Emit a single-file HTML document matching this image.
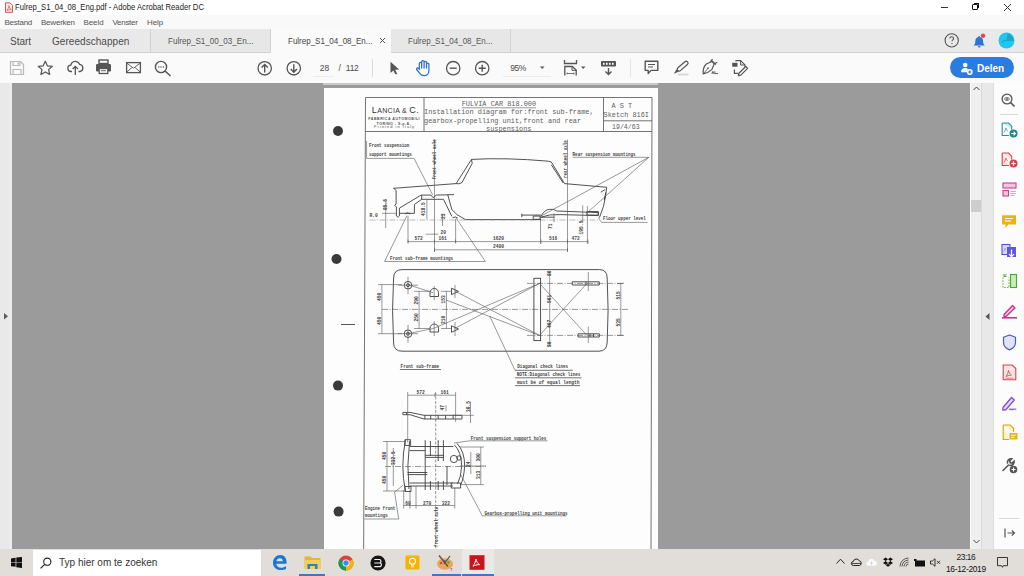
<!DOCTYPE html>
<html><head><meta charset="utf-8">
<style>
*{margin:0;padding:0;box-sizing:border-box}
html,body{width:1024px;height:576px;overflow:hidden;background:#fff;font-family:"Liberation Sans",sans-serif}
.a{position:absolute}
.t{position:absolute;white-space:pre;line-height:1}
svg{position:absolute;overflow:visible}
</style></head><body>
<div class="a" style="left:0;top:0;width:1024px;height:15px;background:#fff"></div>
<div class="a" style="left:0;top:15px;width:1024px;height:14px;background:#f9f9f9"></div>
<div class="a" style="left:0;top:29px;width:1024px;height:24px;background:#e9e9e9;border-bottom:1px solid #d2d2d2"></div>
<div class="a" style="left:0;top:53px;width:1024px;height:30px;background:#fafafa"></div>
<div class="a" style="left:0;top:83px;width:1024px;height:466px;background:#9b9b9b"></div>
<div class="a" style="left:323px;top:83px;width:335px;height:2px;background:#c9c9c9"></div>
<div class="a" style="left:0;top:83px;width:12px;height:466px;background:#e9e9e9;border-right:3.5px solid #ececec"></div>
<div class="a" style="left:970px;top:83px;width:12px;height:466px;background:#efefef;border-left:1px solid #fafafa;border-right:1px solid #d9d9d9"></div>
<div class="a" style="left:982px;top:83px;width:12px;height:466px;background:#e8e8e8;border-right:1px solid #dedede"></div>
<div class="a" style="left:994px;top:83px;width:30px;height:466px;background:#fcfcfc"></div>
<div class="a" style="left:324px;top:88px;width:334px;height:461px;background:#fdfdfd"></div>
<!-- ===== PDF PAGE ===== -->
<svg style="left:324px;top:88px" width="334" height="461" viewBox="324 88 334 461">
<g fill="#3a3a3a">
<circle cx="338" cy="131" r="5"/><circle cx="336.5" cy="259" r="5"/><circle cx="338" cy="385.6" r="5"/><circle cx="338.6" cy="511.6" r="5"/>
</g>
<path d="M341 324.5h14" stroke="#444" stroke-width=".9"/>
<g fill="none" stroke="#505050" stroke-width=".8">
<!-- frame -->
<path d="M365.5 97.5L363.6 560M365.5 97.5H652M652 97.5L651 560"/>
<path d="M365.3 131.5H652M424 97.5V131.5M603.5 97.5V131.5M603.5 120.8H652"/>
</g>
<g font-family="Liberation Mono" fill="#606060">
<text x="461.7" y="106.3" font-size="6.9">FULVIA CAR 818.000</text>
<text x="424" y="114" font-size="6.9">Installation diagram for:front sub-frame,</text>
<text x="424" y="122.8" font-size="6.9">gearbox-propelling unit,front and rear</text>
<text x="486" y="131" font-size="6.9">suspensions</text>
<text x="611.5" y="107.8" font-size="6.9">A S T</text>
<text x="603.5" y="117" font-size="6.9">Sketch 816I</text>
<text x="612" y="128.8" font-size="6.6">19/4/63</text>
</g>
<path d="M461.7 107.8H536" stroke="#555" stroke-width=".6"/>
<g font-family="Liberation Sans" fill="#3a3a3a">
<text x="371.8" y="113.2" font-size="9.2" textLength="47" lengthAdjust="spacing" fill="#333">L<tspan font-size="7">ANCIA &amp; </tspan>C.</text>
<text x="368.3" y="120" font-size="3.6" font-weight="bold" textLength="51.3" lengthAdjust="spacing" fill="#555">FABBRICA AUTOMOBILI</text>
<text x="376.6" y="124.5" font-size="3.6" font-weight="bold" textLength="34" lengthAdjust="spacing" fill="#555">TORINO - S.p.A.</text>
<text x="373.8" y="128.3" font-size="4" textLength="40.2" lengthAdjust="spacing" fill="#555">Printed in Italy</text>
</g>
<!-- ===== car side view ===== -->
<g fill="none" stroke="#3e3e3e" stroke-width=".9">
<path d="M393.5 188.3L456.1 183.6L471.5 159.4Q506 157.4 548.3 161.2L551.3 162L564.5 183.6L606.7 187.3L605.6 195.8L603.5 206.3L599.4 217.7M605.2 189.5L600.8 192.2M605.8 192.5L604.2 200"/>
<path d="M456.1 183.6Q459 184.5 462 182.5L472.2 163.4L471.5 159.4M551.3 164.8L563.2 183"/>
<path d="M393.5 188.3L396.1 190.4V204L394.6 205.2L396.4 207V216L398.2 217.2L399.4 216V208.1L421.1 195.1H431L433.1 197.7L436.3 195.1L454 194.6M447.7 194.6L451.9 209.7Q456 215 465.4 219.6H541"/>
<path d="M399.4 213.3H414.4V204.5L421.7 199.3H443.5L451.9 216.5M421.7 195.1V199.3M405 213.9q2.6-2.2 5.2 0M452.5 218q2.6-2.2 5.2 0"/>
<path d="M521.8 213.7V217.2M521.8 215.1H541M533.2 216.1h6.8v3.2h-6.8z"/>
<path d="M541 216.1Q545 209.4 549.4 209.4H553.5L556.7 211L598.3 212.6V215.6L560 214.6Q549 214 541 217.2H554.6M586.9 211.5h11.4v3.6h-11.4z"/>
</g>
<g fill="none" stroke="#555" stroke-width=".6">
<path d="M369.4 220H599" stroke-dasharray="6 1.5 1 1.5" stroke="#888" stroke-width=".55"/>
<path d="M434.5 139.7V252M567.5 139.7V252"/>
<path d="M408 215.8V242.8M455.6 219V242.8M540.5 216V244M582.7 205.3V221M587.4 206V244M426.9 199.8V219.6M442.5 214V226M554 213.5V222"/>
<path d="M408 241.6H588M434.5 249.8H567.5M408 239.5v4M434.5 239.5v4M455.6 239.5v4M541 239.5v4M567.5 239.5v4M588 239.5v4M434.5 247.8v4M567.5 247.8v4"/>
<path d="M382 213.3H396M385.7 199.8V228"/>
<path d="M425.8 234.2H438.3"/>
<!-- leaders -->
<path d="M366.6 141V158.4H414L432.6 194.8"/>
<path d="M572.6 157.3H648.8L541 216.1M648.8 157.3L588 212"/>
<path d="M601.5 222.4H647.6M601.5 222.4L598.3 217.7"/>
<path d="M384.6 261.5H485.4M384.6 261.5L406.9 215.8M485.4 261.5L456 218"/>
</g>
<g font-family="Liberation Mono" fill="#444" font-size="4.2" font-weight="bold">
<text x="369" y="147" font-size="5.4" textLength="40.3" lengthAdjust="spacingAndGlyphs">Front suspension</text>
<text x="369" y="156" font-size="5.4" textLength="42.8" lengthAdjust="spacingAndGlyphs">support mountings</text>
<text x="572.6" y="155.5" font-size="5.4" textLength="63.0" lengthAdjust="spacingAndGlyphs">Rear suspension mountings</text>
<text x="603" y="220" font-size="5.4" textLength="42.8" lengthAdjust="spacingAndGlyphs">Floor upper level</text>
<text x="390" y="260" font-size="5.4" textLength="63.0" lengthAdjust="spacingAndGlyphs">Front sub-frame mountings</text>
<text x="369.4" y="217" font-size="4.6">R.0</text>
<text x="414.5" y="240" font-size="4.6">572</text>
<text x="438.5" y="240" font-size="4.6">161</text>
<text x="493" y="240" font-size="4.6">1620</text>
<text x="549" y="240" font-size="4.6">516</text>
<text x="571.5" y="240" font-size="4.6">472</text>
<text x="493" y="248" font-size="4.6">2400</text>
<text x="440.4" y="234" font-size="4.6">20</text>
<text transform="translate(436.3 179.5) rotate(-90)" font-size="5.4" textLength="40.3" lengthAdjust="spacingAndGlyphs">front wheel axle</text>
<text transform="translate(567.3 178) rotate(-90)" font-size="5.4" textLength="37.8" lengthAdjust="spacingAndGlyphs">rear wheel axle</text>
<text transform="translate(387.2 210) rotate(-90)" font-size="4.6">85.5</text>
<text transform="translate(425 216) rotate(-90)" font-size="4.6">418.5</text>
<text transform="translate(444.5 219) rotate(-90)" font-size="4.6">23</text>
<text transform="translate(551.5 229) rotate(-90)" font-size="4.6">71</text>
<text transform="translate(582.5 234.4) rotate(-90)" font-size="4.6">195.5</text>
</g>
<!-- ===== chassis plan ===== -->
<g fill="none" stroke="#3e3e3e" stroke-width=".9">
<path d="M402 269.6H599.5Q607 269.6 607.2 278Q609 310 607.2 342Q607 351.2 599 351.2H402Q393.8 351.2 393.6 343Q391.5 310 393.6 278Q393.8 269.6 402 269.6z"/>
<rect x="533.9" y="278.3" width="6.7" height="62.3"/>
<path d="M572.2 281.8h27.1v3.2h-27.1zM586 281.8v3.2M578 333.8h21.3v3.2H578zM590 333.8v3.2M593.5 333.8v3.2"/>
<circle cx="408" cy="285.2" r="3.8"/><circle cx="408" cy="333.7" r="3.8"/><circle cx="408" cy="285.2" r="1.5"/><circle cx="408" cy="333.7" r="1.5"/>
<path d="M430 296.5V292.7A4.2 4.2 0 0 1 438.5 292.7V296.5zM430 332V328.3A4.2 4.2 0 0 1 438.5 328.3V332z"/>
<path d="M451.5 288.2l7 3.2-7 3.2zM451.5 325.8l7 3.2-7 3.2z"/>
</g>
<g fill="none" stroke="#555" stroke-width=".6">
<path d="M382 309.4H628" stroke-dasharray="6 1.5 1 1.5"/>
<path d="M527 283.4H623M527 335.4H623" stroke-dasharray="6 1.5 1 1.5"/>
<path d="M408 276.8V294.3M398 285.2H418M408 325V342.5M398 333.7H418M434.2 286V300M434.2 321V336M455 285V298M455 322V336M549.7 272V346M588.3 272V291M588.3 326.7V343"/>
<path d="M378 284.6H402M378 333.7H402M381.9 284.6V333.7M419.1 291.3V328.5M414 291.3H430M414 328.5H430M446.4 291.3V328.5M441 291.3H452M441 328.5H452"/>
<path d="M620.8 283.4V335.4M617 283.4h7M617 335.4h7"/>
<path d="M407.8 284.6L433.3 292.8M407.8 333.7L433.3 328.5"/>
<path d="M454.7 290.9L539.5 335.4M446 300L539.5 335.4M433.3 328.5L539.5 283.4M454.7 328.5L539.5 283.4"/>
<path d="M539.5 283.4L587 335.4M539.5 335.4L587 283.4"/>
<path d="M515.1 370.5L489.7 316"/>
<path d="M399.9 369.5H440.9M515.1 370.3H572.7M515.1 377.8H581.5M515.1 385.6H580" stroke="#444" stroke-width=".75"/>
</g>
<g font-family="Liberation Mono" fill="#444" font-size="4.2" font-weight="bold">
<text x="400.6" y="367.8" font-size="5.4" textLength="38.5" lengthAdjust="spacingAndGlyphs">Front sub-frame</text>
<text x="517.3" y="368.3" font-size="5.4" textLength="50.8" lengthAdjust="spacingAndGlyphs">Diagonal check lines</text>
<text x="516.8" y="376.2" font-size="5.4" textLength="63.6" lengthAdjust="spacingAndGlyphs">NOTE:Diagonal check lines</text>
<text x="517" y="383.6" font-size="5.4" textLength="62.5" lengthAdjust="spacingAndGlyphs">must be of equal length</text>
<text transform="translate(380.8 301) rotate(-90)" font-size="4.6">450</text>
<text transform="translate(380.8 325) rotate(-90)" font-size="4.6">450</text>
<text transform="translate(418 304.5) rotate(-90)" font-size="4.6">290</text>
<text transform="translate(418 321.5) rotate(-90)" font-size="4.6">250</text>
<text transform="translate(445.3 303.5) rotate(-90)" font-size="4.6">153</text>
<text transform="translate(445.3 324) rotate(-90)" font-size="4.6">210</text>
<text transform="translate(551.2 276) rotate(-90)" font-size="4.6">80</text>
<text transform="translate(551.2 303) rotate(-90)" font-size="4.6">561</text>
<text transform="translate(551.2 328) rotate(-90)" font-size="4.6">407</text>
<text transform="translate(551.2 347) rotate(-90)" font-size="4.6">80</text>
<text transform="translate(619.7 299.5) rotate(-90)" font-size="4.6">515</text>
<text transform="translate(619.7 326.5) rotate(-90)" font-size="4.6">535</text>
</g>
<!-- ===== subframe ===== -->
<g fill="none" stroke="#3e3e3e" stroke-width=".9">
<path d="M402.9 412.4H410L424 415.3H462V419H424L410 414.7H402.9z"/>
<path d="M406.6 412.4V414.7M424.9 415.3v3.7M430.7 415.3v3.7M438.2 415.3v3.7M445.6 415.3v3.7M453.1 415.3v3.7"/>
<path d="M405.4 440.2Q400.3 466 405.4 491M409.6 441Q406.5 466 409 489M404.9 439.7h5.7v5.7h-5.7zM405 486.5h6v5h-6z"/>
<path d="M409.6 446.5H453.3M409.6 450.6H425.2M409.6 483H453M410 486H453M407.5 472.5H427.3M407.5 474.6H427.3"/>
<path d="M425.2 440.2V490M430.4 441V456M430.4 481V490M438.2 440.2V461M438.2 481V490M443.4 440.2V461M443.4 481V490M425.2 455.3H444M425.2 457.4H444M447 466V485"/>
<path d="M454.4 444.9Q461.5 452 461.7 466.25Q461 477 457.5 484M457 443.3Q465 452 464.6 466.25Q464 478 460.5 485M451.25 483h9.35v5h-9.35z"/>
<circle cx="453.9" cy="459" r="3.6"/><circle cx="459" cy="458" r="2.2"/>
</g>
<g fill="none" stroke="#555" stroke-width=".6">
<path d="M385 466.5H486" stroke-dasharray="6 1.5 1 1.5"/>
<path d="M435.7 392V548" stroke-dasharray="3 1.5"/>
<path d="M407.7 395.2H455.6M407.7 392V442.5M455.6 392V422M435 393v4M470.5 401.6V423M453 415.3H473.8M446 405V411.5"/>
<path d="M387 441.5V491M383 441.5H406M383 491H406M393.3 448V486"/>
<path d="M480.8 447V484.6M460 447H484M460 466H486M460 484.6H484M470.8 452V474"/>
<path d="M403.7 505.5H454.8M403.7 490V508.5M410 490V508.5M416 486V508.5M454.8 488V508.5"/>
<path d="M469.8 440.8H547.5M469.8 440.8L454 443"/>
<path d="M460.4 474L482.3 515.8H566.7"/>
<path d="M364.5 519H398.7L394.6 492L403.4 485"/>
</g>
<g font-family="Liberation Mono" fill="#444" font-size="4.2" font-weight="bold">
<text x="470.8" y="440" font-size="5.4" textLength="75.6" lengthAdjust="spacingAndGlyphs">Front suspension support holes</text>
<text x="484.4" y="514.5" font-size="5.4" textLength="83.2" lengthAdjust="spacingAndGlyphs">Gearbox-propelling unit mountings</text>
<text x="365" y="510" font-size="5.4" textLength="30.2" lengthAdjust="spacingAndGlyphs">Engine front</text>
<text x="365" y="516.5" font-size="5.4" textLength="22.7" lengthAdjust="spacingAndGlyphs">mountings</text>
<text x="416.5" y="394" font-size="4.6">572</text>
<text x="440.5" y="394" font-size="4.6">161</text>
<text x="405.3" y="504.5" font-size="4.6">60</text>
<text x="423" y="504.5" font-size="4.6">270</text>
<text x="441.8" y="504.5" font-size="4.6">322</text>
<text transform="translate(444 410.5) rotate(-90)" font-size="4.6">47</text>
<text transform="translate(470.3 412) rotate(-90)" font-size="4.6">30.5</text>
<text transform="translate(386 460) rotate(-90)" font-size="4.6">450</text>
<text transform="translate(386 484) rotate(-90)" font-size="4.6">450</text>
<text transform="translate(395 465) rotate(-90)" font-size="4.6">332.5</text>
<text transform="translate(480 461.5) rotate(-90)" font-size="4.6">300</text>
<text transform="translate(480 479) rotate(-90)" font-size="4.6">313</text>
<text transform="translate(470 467) rotate(-90)" font-size="4.6">24</text>
<text transform="translate(437.8 547) rotate(-90)" font-size="5.4" textLength="40.3" lengthAdjust="spacingAndGlyphs">front wheel axle</text>
</g>
</svg>
<!-- ===== TITLE BAR ===== -->
<svg style="left:4px;top:2px" width="10" height="11" viewBox="0 0 10 11"><path d="M1.5 .8h4.5l2.5 2.5v7H1.5z" fill="#fde6e6" stroke="#d9534f" stroke-width="1"/><path d="M3 8.5c1-1.5 1.8-3 2-4.8c.3 1.8 1.3 3.2 2.3 3.8c-1.5 0-3 .3-4.3 1z" fill="none" stroke="#d9534f" stroke-width=".7"/></svg>
<div class="t" style="left:14.5px;top:3.2px;font-size:9.2px;transform:scaleX(0.835);transform-origin:0 0;color:#222">Fulrep_S1_04_08_Eng.pdf - Adobe Acrobat Reader DC</div>
<div class="a" style="left:941px;top:7px;width:7px;height:1px;background:#333"></div>
<div class="a" style="left:972px;top:4px;width:6px;height:6px;border:1.3px solid #111;border-radius:1px"></div>
<div class="a" style="left:974px;top:3px;width:5px;height:5px;border-top:1.2px solid #111;border-right:1.2px solid #111"></div>
<svg style="left:1004px;top:4px" width="7" height="7" viewBox="0 0 7 7"><path d="M0 0L7 7M7 0L0 7" stroke="#333" stroke-width="1"/></svg>
<!-- ===== MENU ===== -->
<div class="t" style="left:4.5px;top:19px;font-size:8px;letter-spacing:-0.26px;color:#555">Bestand</div>
<div class="t" style="left:41px;top:19px;font-size:8px;letter-spacing:-0.22px;color:#555">Bewerken</div>
<div class="t" style="left:83.5px;top:19px;font-size:8px;letter-spacing:-0.09px;color:#555">Beeld</div>
<div class="t" style="left:112.5px;top:19px;font-size:8px;letter-spacing:-0.3px;color:#555">Venster</div>
<div class="t" style="left:147px;top:19px;font-size:8px;letter-spacing:-0.1px;color:#555">Help</div>
<!-- ===== TABS ===== -->
<div class="t" style="left:10px;top:37px;font-size:10px;color:#4b4b4b">Start</div>
<div class="t" style="left:52px;top:37px;font-size:10px;letter-spacing:0.05px;color:#4b4b4b">Gereedschappen</div>
<div class="a" style="left:150px;top:29px;width:1px;height:23px;background:#d4d4d4"></div>
<div class="a" style="left:151px;top:29px;width:120px;height:23px;background:#e7e7e7"></div>
<div class="a" style="left:270px;top:29px;width:1px;height:23px;background:#d2d2d2"></div>
<div class="t" style="left:168px;top:36.6px;font-size:9.2px;transform:scaleX(0.88);transform-origin:0 0;color:#555">Fulrep_S1_00_03_En...</div>
<div class="a" style="left:271px;top:29px;width:120px;height:24px;background:#fafafa"></div>
<div class="t" style="left:288.3px;top:36.6px;font-size:9.2px;transform:scaleX(0.87);transform-origin:0 0;color:#444">Fulrep_S1_04_08_En...</div>
<svg style="left:380px;top:38px" width="5" height="5" viewBox="0 0 5 5"><path d="M0 0L5 5M5 0L0 5" stroke="#555" stroke-width="1"/></svg>
<div class="a" style="left:391px;top:29px;width:119px;height:23px;background:#e7e7e7"></div>
<div class="a" style="left:510px;top:29px;width:1px;height:23px;background:#d2d2d2"></div>
<div class="t" style="left:408px;top:36.6px;font-size:9.2px;transform:scaleX(0.87);transform-origin:0 0;color:#555">Fulrep_S1_04_08_En...</div>
<!-- help, bell, avatar -->
<svg style="left:944px;top:33px" width="16" height="16" viewBox="0 0 16 16"><circle cx="7.7" cy="7.4" r="6.6" fill="none" stroke="#555" stroke-width="1.1"/><path d="M5.8 5.6c0-1.2.9-1.9 1.9-1.9s1.9.7 1.9 1.7c0 1.3-1.6 1.5-1.6 2.9" fill="none" stroke="#555" stroke-width="1.1"/><circle cx="8" cy="10.6" r=".7" fill="#555"/></svg>
<svg style="left:972px;top:33px" width="16" height="16" viewBox="0 0 16 16"><path d="M1.5 12.5c1.3-1 1.8-2 1.8-4.2c0-2.3 1.3-4 3.2-4.2V3h1.4v1.1c1.9.3 3.2 1.9 3.2 4.2c0 2.2.5 3.2 1.8 4.2z" fill="#2d74d8"/><ellipse cx="7.2" cy="13.8" rx="1.4" ry=".8" fill="#2d74d8"/><circle cx="11" cy="2.8" r="2.2" fill="#e34850"/></svg>
<svg style="left:998px;top:32px" width="17" height="17" viewBox="0 0 17 17"><circle cx="8.5" cy="8.5" r="8" fill="#1fc6ef"/><path d="M8.5 8.5L9.5 1.5A7 7 0 0 1 15.5 8.5z" fill="#1aa7c8"/><path d="M4 10c2-2 5-2.5 11.5-1.5" fill="none" stroke="#1aa7c8" stroke-width="1.2"/></svg>
<!-- ===== TOOLBAR ===== -->
<!-- save (disabled) -->
<svg style="left:9px;top:60px" width="16" height="16" viewBox="0 0 16 16"><path d="M1.5 1.5h10l3 3v10h-13z" fill="none" stroke="#b9b9b9" stroke-width="1.2"/><path d="M4 1.5v4h7v-4M4 14.5v-5h8v5" fill="none" stroke="#b9b9b9" stroke-width="1.2"/><rect x="8.5" y="2.5" width="1.5" height="2" fill="#b9b9b9"/></svg>
<!-- star -->
<svg style="left:37px;top:60px" width="17" height="16" viewBox="0 0 17 16"><path d="M8.3 1.2l2.1 4.6 5 .5-3.8 3.3 1.1 4.9-4.4-2.6-4.4 2.6 1.1-4.9L1.2 6.3l5-.5z" fill="none" stroke="#555" stroke-width="1.2" stroke-linejoin="round"/></svg>
<!-- cloud upload -->
<svg style="left:67px;top:60px" width="17" height="16" viewBox="0 0 17 16"><path d="M5 11.5H4.2a3.2 3.2 0 0 1-.3-6.4A4.5 4.5 0 0 1 12.6 4.4a3.6 3.6 0 0 1 .4 7.1H11.5" fill="none" stroke="#555" stroke-width="1.3"/><path d="M8.3 15V6.5M5.6 9l2.7-2.7L11 9" fill="none" stroke="#555" stroke-width="1.3"/></svg>
<!-- printer -->
<svg style="left:95px;top:59px" width="17" height="16" viewBox="0 0 17 16"><rect x="4" y="1" width="9" height="3.5" fill="none" stroke="#555" stroke-width="1.4"/><rect x="1" y="5" width="15" height="7.5" rx="1.2" fill="#555"/><rect x="4.2" y="9.5" width="8.6" height="5" fill="#fafafa" stroke="#555" stroke-width="1.3"/><rect x="6" y="11.3" width="5" height=".9" fill="#555"/></svg>
<!-- mail -->
<svg style="left:125px;top:61px" width="17" height="13" viewBox="0 0 17 13"><rect x="1.6" y="1.6" width="13.8" height="10" fill="none" stroke="#555" stroke-width="1.3"/><path d="M1.6 2l6.9 5.2 6.9-5.2M1.6 11.2l5.2-4.6M15.4 11.2l-5.2-4.6" fill="none" stroke="#555" stroke-width=".9"/></svg>
<!-- zoom search -->
<svg style="left:154px;top:60px" width="18" height="17" viewBox="0 0 18 17"><circle cx="7" cy="7" r="5.6" fill="none" stroke="#555" stroke-width="1.4"/><path d="M11 11l5.5 5" stroke="#555" stroke-width="1.6"/><circle cx="4.8" cy="7" r=".7" fill="#555"/><circle cx="7" cy="7" r=".7" fill="#555"/><circle cx="9.2" cy="7" r=".7" fill="#555"/></svg>
<!-- up/down -->
<svg style="left:256px;top:60px" width="18" height="17" viewBox="0 0 18 17"><circle cx="8.7" cy="8.3" r="6.7" fill="none" stroke="#555" stroke-width="1.3"/><path d="M8.7 12.5V4.5M5.6 7.5l3.1-3.1 3.1 3.1" fill="none" stroke="#555" stroke-width="1.4"/></svg>
<svg style="left:285px;top:60px" width="18" height="17" viewBox="0 0 18 17"><circle cx="8.8" cy="8.3" r="6.7" fill="none" stroke="#555" stroke-width="1.3"/><path d="M8.8 4.2v8M5.7 9.1l3.1 3.1 3.1-3.1" fill="none" stroke="#555" stroke-width="1.4"/></svg>
<div class="a" style="left:313px;top:76px;width:21px;height:1px;background:#ececec"></div>
<div class="t" style="left:319.8px;top:64px;font-size:8.5px;letter-spacing:-0.1px;color:#4a4a4a">28</div>
<div class="t" style="left:338.5px;top:64px;font-size:8.5px;color:#4a4a4a">/</div>
<div class="t" style="left:345.8px;top:64px;font-size:8.5px;letter-spacing:-0.25px;color:#4a4a4a">112</div>
<div class="a" style="left:372px;top:59px;width:1px;height:18px;background:#dcdcdc"></div>
<!-- pointer -->
<svg style="left:389px;top:61px" width="12" height="14" viewBox="0 0 12 14"><path d="M1.5 .8v11.3l2.9-2.6 2 4.1 1.8-.9-2-3.9 3.9-.2z" fill="#555"/></svg>
<!-- hand -->
<svg style="left:415px;top:59px" width="17" height="18" viewBox="0 0 17 18"><path d="M4.3 10.5V4.5a1.2 1.2 0 0 1 2.4 0V9V2.8a1.2 1.2 0 0 1 2.4 0V9V3.5a1.2 1.2 0 0 1 2.4 0V9V5.3a1.2 1.2 0 0 1 2.4 0v6.2c0 3-2 5.2-4.8 5.2c-2 0-3.2-.8-4.3-2.3L1.6 10.5a1.2 1.2 0 0 1 1.9-1.3z" fill="none" stroke="#2f72c4" stroke-width="1.25" stroke-linejoin="round"/></svg>
<!-- zoom out/in -->
<svg style="left:445px;top:60px" width="17" height="17" viewBox="0 0 17 17"><circle cx="8.2" cy="8.2" r="6.7" fill="none" stroke="#555" stroke-width="1.3"/><path d="M4.7 8.2h7" stroke="#555" stroke-width="1.4"/></svg>
<svg style="left:474px;top:60px" width="17" height="17" viewBox="0 0 17 17"><circle cx="8.2" cy="8.2" r="6.7" fill="none" stroke="#555" stroke-width="1.3"/><path d="M4.7 8.2h7M8.2 4.7v7" stroke="#555" stroke-width="1.4"/></svg>
<div class="a" style="left:503px;top:76px;width:48px;height:1px;background:#ececec"></div>
<div class="t" style="left:510.2px;top:64px;font-size:8.5px;letter-spacing:-0.45px;color:#4a4a4a">95%</div>
<svg style="left:540px;top:66px" width="5" height="4" viewBox="0 0 5 4"><path d="M0 .5h4.5L2.25 3z" fill="#555"/></svg>
<!-- fit page -->
<svg style="left:563px;top:59px" width="16" height="18" viewBox="0 0 16 18"><path d="M1.5 1v3.5h12V1" fill="none" stroke="#555" stroke-width="1.3"/><path d="M1.8 16.5V7.5h7.5l3.9 3.6v5.4" fill="none" stroke="#555" stroke-width="1.3"/><path d="M9 7.5v3.8h4" fill="none" stroke="#555" stroke-width="1"/><path d="M4 14.5h7M4 13.5v2M11 13.5v2" stroke="#555" stroke-width=".8"/></svg>
<svg style="left:581px;top:66px" width="5" height="4" viewBox="0 0 5 4"><path d="M0 .5h4.5L2.25 3z" fill="#555"/></svg>
<!-- scroll mode -->
<svg style="left:600px;top:60px" width="17" height="16" viewBox="0 0 17 16"><rect x="1" y="1" width="15" height="5.5" rx="1" fill="#555"/><rect x="3" y="2.8" width="1.6" height="2" fill="#fafafa"/><rect x="6" y="2.8" width="1.6" height="2" fill="#fafafa"/><rect x="9" y="2.8" width="1.6" height="2" fill="#fafafa"/><rect x="12" y="2.8" width="1.6" height="2" fill="#fafafa"/><path d="M8.5 8v6.5M5.5 11.5l3 3 3-3" fill="none" stroke="#555" stroke-width="1.4"/></svg>
<div class="a" style="left:630px;top:59px;width:1px;height:18px;background:#e4e4e4"></div>
<!-- comment -->
<svg style="left:644px;top:60px" width="16" height="16" viewBox="0 0 16 16"><path d="M1.2 1.2h12.6v9.2H7l-2.8 3.2v-3.2h-3z" fill="none" stroke="#555" stroke-width="1.4" stroke-linejoin="round"/><path d="M4 4.5h7M4 7h5" stroke="#555" stroke-width="1.1"/></svg>
<!-- highlighter -->
<svg style="left:665px;top:54px" width="30" height="28" viewBox="0 0 30 28"><g transform="rotate(-41 17.6 12.2)"><rect x="11.2" y="10.3" width="13" height="3.8" rx="1.9" fill="none" stroke="#555" stroke-width="1.2"/><path d="M11.2 10.6v3.2l-2.6-.6v-2z" fill="#555"/><path d="M8.6 11.2l-2.4 1 2.4 1z" fill="#555"/></g><rect x="13" y="19.5" width="10.5" height="2" fill="#d8d8d8"/></svg>
<!-- sign pen -->
<svg style="left:700px;top:58px" width="20" height="18" viewBox="0 0 20 18"><path d="M3.2 15.8C2.8 12 4.2 8.2 6.2 6L12 3.5l2.3 2.3-2.5 5.8c-2.2 2-6 3.6-8.6 4.2z" fill="none" stroke="#555" stroke-width="1.2" stroke-linejoin="round"/><path d="M10.2 3.8L12.5 1M14.2 6l3-1.8M11.4 2.2l4.5 4.5" fill="none" stroke="#555" stroke-width="1.1"/><circle cx="8" cy="10.2" r=".9" fill="#555"/><path d="M3.5 15.5l4-4.5" stroke="#555" stroke-width=".8"/><path d="M11.8 15.8l1-2.5 1 2.5M12.2 14.9h1.3M14.8 13.2v2.6l1.2-.5 1 .4 1-.2" fill="none" stroke="#555" stroke-width=".9"/></svg>
<!-- edit pdf -->
<svg style="left:731px;top:59px" width="18" height="18" viewBox="0 0 18 18"><path d="M4.3 1.6H9.6l4.4 4.4V8" fill="none" stroke="#555" stroke-width="1.2"/><path d="M9.6 1.6V6H14z" fill="#ddd" stroke="#555" stroke-width="1"/><rect x="1.2" y="3.8" width="5.3" height="3.9" fill="#555"/><path d="M3.4 10.4v4h3.6" fill="none" stroke="#555" stroke-width="1.2"/><path d="M14.8 7.5l1.8 1.8-6.8 6.8-2.5.6.6-2.4z" fill="none" stroke="#555" stroke-width="1.2" stroke-linejoin="round"/></svg>
<!-- Delen button -->
<div class="a" style="left:950px;top:57px;width:64px;height:21px;border-radius:10.5px;background:#2b7ce0"></div>
<svg style="left:960px;top:62px" width="13" height="13" viewBox="0 0 13 13"><circle cx="5.2" cy="3" r="2.3" fill="#fff"/><path d="M1 10.2c0-2.7 1.6-4.3 4-4.3c1.3 0 2.3.4 3 1.2a3.4 3.4 0 0 0-1.1 3.1z" fill="#fff"/><circle cx="9.8" cy="10" r="2.9" fill="#fff"/><path d="M9.8 8.3v3.4M8.1 10h3.4" stroke="#2b7ce0" stroke-width="1"/></svg>
<div class="t" style="left:977px;top:63.5px;font-size:10px;font-weight:bold;letter-spacing:-0.05px;color:#fff">Delen</div>
<!-- ===== LEFT STRIP / SCROLL / RIGHT PANEL ===== -->
<svg style="left:4px;top:313px" width="5" height="7" viewBox="0 0 5 7"><path d="M0 0L4 3.3 0 6.6z" fill="#5c5c5c"/></svg>
<svg style="left:973px;top:86px" width="7" height="5" viewBox="0 0 7 5"><path d="M.5 4L3.5 1 6.5 4" fill="none" stroke="#444" stroke-width="1"/></svg>
<div class="a" style="left:971px;top:200px;width:10px;height:12px;background:#cdcdcd"></div>
<svg style="left:973px;top:539px" width="7" height="5" viewBox="0 0 7 5"><path d="M.5 1L3.5 4 6.5 1" fill="none" stroke="#444" stroke-width="1"/></svg>
<svg style="left:985px;top:313px" width="5" height="7" viewBox="0 0 5 7"><path d="M4.5 0L.5 3.5 4.5 7z" fill="#555"/></svg>
<!-- right panel icons -->
<svg style="left:1001px;top:93px" width="16" height="14" viewBox="0 0 16 14"><circle cx="6" cy="6" r="4.9" fill="none" stroke="#555" stroke-width="1.3"/><path d="M9.5 9.5l4 3.8" stroke="#555" stroke-width="1.6"/><path d="M3.3 6c1.5-2 3.9-2 5.4 0c-1.5 2-3.9 2-5.4 0z" fill="none" stroke="#555" stroke-width=".9"/><circle cx="6" cy="6" r=".9" fill="#555"/></svg>
<div class="a" style="left:1000px;top:114px;width:18px;height:1px;background:#d8d8d8"></div>
<!-- export pdf teal -->
<svg style="left:1001px;top:122px" width="17" height="16" viewBox="0 0 17 16"><path d="M1.2 1h6.3l3.2 3.2V7.5M8 13.5H1.2z" fill="#cfeeee" stroke="#2a8f8f" stroke-width="1.1"/><path d="M1.2 1v12.5H8" fill="none" stroke="#2a8f8f" stroke-width="1.1"/><path d="M3 10.5c1-1.3 1.7-3 2-4.7c.3 1.6 1.1 2.9 2.2 3.6" fill="none" stroke="#2a8f8f" stroke-width=".7"/><circle cx="12.5" cy="11.5" r="4" fill="#1b8a8a"/><path d="M10.3 11.5h4M12.6 9.7l1.8 1.8-1.8 1.8" fill="none" stroke="#fff" stroke-width="1.1"/></svg>
<!-- create pdf red -->
<svg style="left:1001px;top:152px" width="17" height="16" viewBox="0 0 17 16"><path d="M1.2 1h6.3l3.2 3.2V7.5M8 13.5H1.2V1" fill="#fbe0e0" stroke="#d0454c" stroke-width="1.1"/><path d="M3 10.5c1-1.3 1.7-3 2-4.7c.3 1.6 1.1 2.9 2.2 3.6" fill="none" stroke="#d0454c" stroke-width=".7"/><circle cx="12.5" cy="11.5" r="4" fill="#d4434c"/><path d="M10.3 11.5h4.4M12.5 9.3v4.4" fill="none" stroke="#fff" stroke-width="1.2"/></svg>
<!-- forms pink -->
<svg style="left:1002px;top:182px" width="16" height="16" viewBox="0 0 16 16"><rect x="1" y="1" width="13" height="5" fill="#f3c4dc" stroke="#c6408e" stroke-width="1.1"/><rect x="1" y="8.5" width="5.5" height="5.5" fill="#f3c4dc" stroke="#c6408e" stroke-width="1.1"/><path d="M8.5 9.5h5.5M8.5 11.5h5.5M8.5 13.5h4" stroke="#d88bb8" stroke-width=".8"/></svg>
<!-- comment yellow -->
<svg style="left:1001px;top:214px" width="16" height="16" viewBox="0 0 16 16"><path d="M1 1.2h14v9.3H7.2L4.5 14v-3.5H1z" fill="#e9b60c"/><path d="M4 4.5h8M4 7h6" stroke="#fff" stroke-width="1.1"/></svg>
<!-- combine purple -->
<svg style="left:1001px;top:243px" width="16" height="17" viewBox="0 0 16 17"><rect x="1" y="1.5" width="8" height="10" fill="#dcd8fb" stroke="#5550d8" stroke-width="1.1"/><rect x="6" y="4" width="9" height="10" fill="#5c58e0"/><path d="M10.5 6.5v7M8 11.2l2.5 2.5 2.5-2.5" fill="none" stroke="#fff" stroke-width="1.2"/><path d="M2.8 8.5c.8-1 1.3-2.2 1.5-3.5" fill="none" stroke="#5550d8" stroke-width=".6"/></svg>
<!-- organize green -->
<svg style="left:1002px;top:273px" width="16" height="17" viewBox="0 0 16 17"><path d="M1 4.5v10h6v-10" fill="none" stroke="#6cbd3e" stroke-width="1.1" stroke-dasharray="1.6 1.2"/><rect x="8.5" y="1.5" width="6" height="13" fill="#c9ecb4" stroke="#4aa83a" stroke-width="1.1"/><path d="M4.5 1l-2.5 2.5M2 1v2.5h2.5" fill="none" stroke="#4aa83a" stroke-width="1"/></svg>
<!-- fill sign pink -->
<svg style="left:1001px;top:303px" width="17" height="16" viewBox="0 0 17 16"><path d="M3 11.5l8.5-9 2.5 2.5-9 8.5H3z" fill="#f5c3dd" stroke="#c9338b" stroke-width="1.3" stroke-linejoin="round"/><path d="M1 14.8h15" stroke="#c9338b" stroke-width="1.6"/></svg>
<!-- protect shield -->
<svg style="left:1002px;top:334px" width="15" height="17" viewBox="0 0 15 17"><path d="M7.5 1l6 2.3v5c0 3.6-2.6 6.3-6 7.6c-3.4-1.3-6-4-6-7.6v-5z" fill="#dfe4fb" stroke="#4a5bc8" stroke-width="1.2" stroke-linejoin="round"/></svg>
<!-- pdf red -->
<svg style="left:1002px;top:364px" width="15" height="17" viewBox="0 0 15 17"><path d="M1.2 1h9l3.6 3.6v11.2H1.2z" fill="#fce3e3" stroke="#d0454c" stroke-width="1.1"/><path d="M4 12.5c1.3-1.8 2.2-4 2.5-6.2c.4 2.1 1.4 3.8 2.9 4.8c-2 0-3.8.5-5.4 1.4z" fill="none" stroke="#d0454c" stroke-width=".8"/><path d="M3.5 14.2h8" stroke="#d0454c" stroke-width=".6"/></svg>
<!-- sign purple -->
<svg style="left:1001px;top:395px" width="17" height="17" viewBox="0 0 17 17"><path d="M2 12.5L10.5 2.5l2.8 2.5-8.5 9.8L1.8 15z" fill="#e3d9f9" stroke="#7a4fd0" stroke-width="1.3" stroke-linejoin="round"/><path d="M8 14.5c1-1 1.5-.5 2 .3c.6-1 1.2-1 1.8-.2c.5-.6 1.2-.8 3.5-.3" fill="none" stroke="#7a4fd0" stroke-width="1.1"/></svg>
<!-- yellow doc -->
<svg style="left:1002px;top:424px" width="16" height="17" viewBox="0 0 16 17"><path d="M1.2 1h7l3.3 3.3V8M7 15.5H1.2V1" fill="#fdf3bf" stroke="#d2a50a" stroke-width="1.1"/><rect x="7.5" y="9" width="8" height="6.5" fill="#e5b50c"/><path d="M9 11.2h5M9 13.3h3.5" stroke="#fff" stroke-width=".9"/></svg>
<!-- tools wrench -->
<svg style="left:1001px;top:457px" width="17" height="17" viewBox="0 0 17 17"><path d="M2 13.5l5.5-5.5M6.5 6c-.5-2.5 1.7-4.6 4.2-4.2L8.8 3.7l.4 2 2 .4 1.9-1.9c.4 2.5-1.7 4.6-4.2 4.2" fill="none" stroke="#555" stroke-width="1.6" stroke-linecap="round"/><circle cx="12.5" cy="12.5" r="3.8" fill="#555"/><path d="M10.5 12.5h4M12.5 10.5v4" stroke="#fff" stroke-width="1.1"/></svg>
<div class="a" style="left:999px;top:518px;width:20px;height:1px;background:#d8d8d8"></div>
<svg style="left:1004px;top:528px" width="12" height="10" viewBox="0 0 12 10"><path d="M1 .5v9" stroke="#555" stroke-width="1.2"/><path d="M3.5 5h7M7.8 2.3l2.7 2.7-2.7 2.7" fill="none" stroke="#555" stroke-width="1.2"/></svg>
<!-- ===== TASKBAR ===== -->
<div class="a" style="left:0;top:549px;width:1024px;height:27px;background:#e1ddd9"></div>
<svg style="left:11px;top:557px" width="11" height="11" viewBox="0 0 11 11"><path d="M0 1.4L4.6.7v4.2H0zM5.3.6L11 0v4.9H5.3zM0 5.6h4.6v4.2L0 9.2zM5.3 5.6H11V11l-5.7-.7z" fill="#111"/></svg>
<div class="a" style="left:33px;top:550px;width:228px;height:26px;background:#fff"></div>
<svg style="left:40px;top:557px" width="12" height="12" viewBox="0 0 12 12"><circle cx="7.3" cy="4.7" r="3.6" fill="none" stroke="#222" stroke-width="1.1"/><path d="M4.7 7.3L.6 11.4" stroke="#222" stroke-width="1.2"/></svg>
<div class="t" style="left:59px;top:558px;font-size:10px;color:#333">Typ hier om te zoeken</div>
<!-- edge -->
<svg style="left:272px;top:555px" width="16" height="15" viewBox="0 0 16 15"><path d="M14.5 8.8H4.3c.2 2.6 2.3 4 4.8 4c1.8 0 3.5-.6 4.9-1.5v2.6c-1.5.8-3.3 1.1-5.3 1.1C4.2 15 1 12.3 1 7.7C1 3.3 4.4 0 8.3 0c3.9 0 6.2 2.8 6.2 6.8zM4.4 6.2h6.4c0-1.7-1-2.9-3-2.9c-1.8 0-3.1 1.2-3.4 2.9z" fill="#1877d6"/></svg>
<!-- explorer -->
<svg style="left:304px;top:555px" width="17" height="15" viewBox="0 0 17 15"><path d="M.5 1.5h6l1.5 1.5h8.5v11h-16z" fill="#e8b53b"/><rect x=".5" y="5" width="16" height="9" fill="#f7cf57"/><path d="M3.5 14v-5h10v5h-2.5v-3h-5v3z" fill="#2d7fc9"/></svg>
<div class="a" style="left:299px;top:574px;width:26px;height:2px;background:#3a79c9"></div>
<!-- chrome -->
<svg style="left:338px;top:555px" width="16" height="16" viewBox="0 0 16 16"><circle cx="8" cy="8" r="7.5" fill="#db4437"/><path d="M8 8L1.5 4.25A7.5 7.5 0 0 0 8 15.5z" fill="#0f9d58"/><path d="M8 8l6.5-3.75A7.5 7.5 0 0 1 8 15.5z" fill="#f4b400"/><circle cx="8" cy="8" r="3.5" fill="#fff"/><circle cx="8" cy="8" r="2.7" fill="#4285f4"/></svg>
<!-- black B circle -->
<svg style="left:370px;top:555px" width="16" height="16" viewBox="0 0 16 16"><circle cx="8" cy="8" r="7.6" fill="#151515"/><path d="M4.3 4.5h5.5a1.9 1.9 0 0 1 0 3.5h-5M4.3 8h6a2 2 0 0 1 0 3.6H4.3" fill="none" stroke="#eee" stroke-width="1.2"/></svg>
<!-- keep yellow -->
<svg style="left:405px;top:555px" width="15" height="15" viewBox="0 0 15 15"><rect x=".5" y=".5" width="14" height="14" rx="1.5" fill="#f5b400"/><circle cx="7.5" cy="6.2" r="3" fill="none" stroke="#fff" stroke-width="1.1"/><path d="M6 10.2h3M6.3 11.8h2.4" stroke="#fff" stroke-width="1"/></svg>
<!-- paint palette -->
<svg style="left:436px;top:554px" width="18" height="17" viewBox="0 0 18 17"><ellipse cx="9" cy="10" rx="8" ry="5.8" fill="#e7a85a"/><circle cx="5" cy="9" r="1.3" fill="#e34234"/><circle cx="8.5" cy="7.3" r="1.3" fill="#3b7bd4"/><circle cx="12.5" cy="8.5" r="1.3" fill="#56a84a"/><path d="M3 1.5l9 11" stroke="#7a4a2a" stroke-width="1.4"/><path d="M14 2l-6 8" stroke="#555" stroke-width="1.2"/><text x="14" y="17" font-size="4" fill="#222" font-family="Liberation Sans">7</text></svg>
<div class="a" style="left:432px;top:574px;width:29px;height:2px;background:#3a79c9"></div>
<!-- acrobat active -->
<div class="a" style="left:462px;top:549px;width:32px;height:27px;background:#ebe8e6"></div>
<svg style="left:469px;top:555px" width="16" height="15" viewBox="0 0 16 15"><rect x=".5" y=".2" width="15" height="14.6" fill="#c6161c"/><path d="M4 11.2c1.5-2 2.6-4.6 3-7.2c.4 2.5 1.7 4.5 3.5 5.6c-2.5 0-4.6.6-6.5 1.6z" fill="none" stroke="#fff" stroke-width="1"/></svg>
<div class="a" style="left:462px;top:574px;width:32px;height:2px;background:#3a79c9"></div>
<!-- tray -->
<svg style="left:836px;top:558px" width="9" height="6" viewBox="0 0 9 6"><path d="M.5 5.5L4.5 1.2l4 4.3" fill="none" stroke="#222" stroke-width="1"/></svg>
<svg style="left:851px;top:558px" width="11" height="8" viewBox="0 0 11 8"><path d="M2.5 7.5a2 2 0 0 1-.2-4A3.2 3.2 0 0 1 8.4 3a2.3 2.3 0 0 1 .1 4.5z" fill="none" stroke="#222" stroke-width="1"/><path d="M1 5.5h9" stroke="#222" stroke-width=".8"/></svg>
<svg style="left:866px;top:558px" width="11" height="8" viewBox="0 0 11 8"><path d="M2.5 7.8a2.2 2.2 0 0 1-.2-4.4A3.3 3.3 0 0 1 8.6 3a2.4 2.4 0 0 1 0 4.8z" fill="#fafafa"/><path d="M5.5 7V4M4.2 5.2l1.3-1.3 1.3 1.3" fill="none" stroke="#ccc" stroke-width=".8"/></svg>
<svg style="left:883px;top:557px" width="10" height="10" viewBox="0 0 10 10"><path d="M2.7.5L0 2.3l2.7 1.8L5 2.3zM7.3.5L5 2.3l2.3 1.8L10 2.3zM2.7 4.1L0 5.9l2.7 1.8L5 5.9zM7.3 4.1L5 5.9l2.3 1.8L10 5.9zM2.8 8.3L5 9.8l2.2-1.5L5 6.6z" fill="#111"/></svg>
<svg style="left:899px;top:557px" width="10" height="10" viewBox="0 0 10 10"><path d="M1 9.5A8.5 8.5 0 0 1 9.5 1M3 9.5A6.5 6.5 0 0 1 9.5 3M5 9.5A4.5 4.5 0 0 1 9.5 5M7 9.5A2.5 2.5 0 0 1 9.5 7" fill="none" stroke="#333" stroke-width=".8"/></svg>
<svg style="left:914px;top:559px" width="11" height="8" viewBox="0 0 11 8"><rect x="0" y="0" width="2.5" height="2" fill="#111"/><rect x="1" y="1.5" width="10" height="6" fill="#111"/></svg>
<svg style="left:930px;top:558px" width="11" height="9" viewBox="0 0 11 9"><path d="M.5 3h2l2.5-2.3v7.6L2.5 6h-2z" fill="none" stroke="#222" stroke-width=".9"/><path d="M7 2.8l3 3M10 2.8l-3 3" stroke="#222" stroke-width=".9"/></svg>
<div class="t" style="left:956.5px;top:552.5px;font-size:8.4px;letter-spacing:-0.45px;color:#222">23:16</div>
<div class="t" style="left:946px;top:565px;font-size:8.4px;letter-spacing:-0.3px;color:#111">16-12-2019</div>
<svg style="left:997px;top:557px" width="12" height="12" viewBox="0 0 12 12"><path d="M.5.5h10v8.2H6.3L5.5 10.3 4.7 8.7H.5z" fill="none" stroke="#222" stroke-width=".9"/></svg>
</body></html>
